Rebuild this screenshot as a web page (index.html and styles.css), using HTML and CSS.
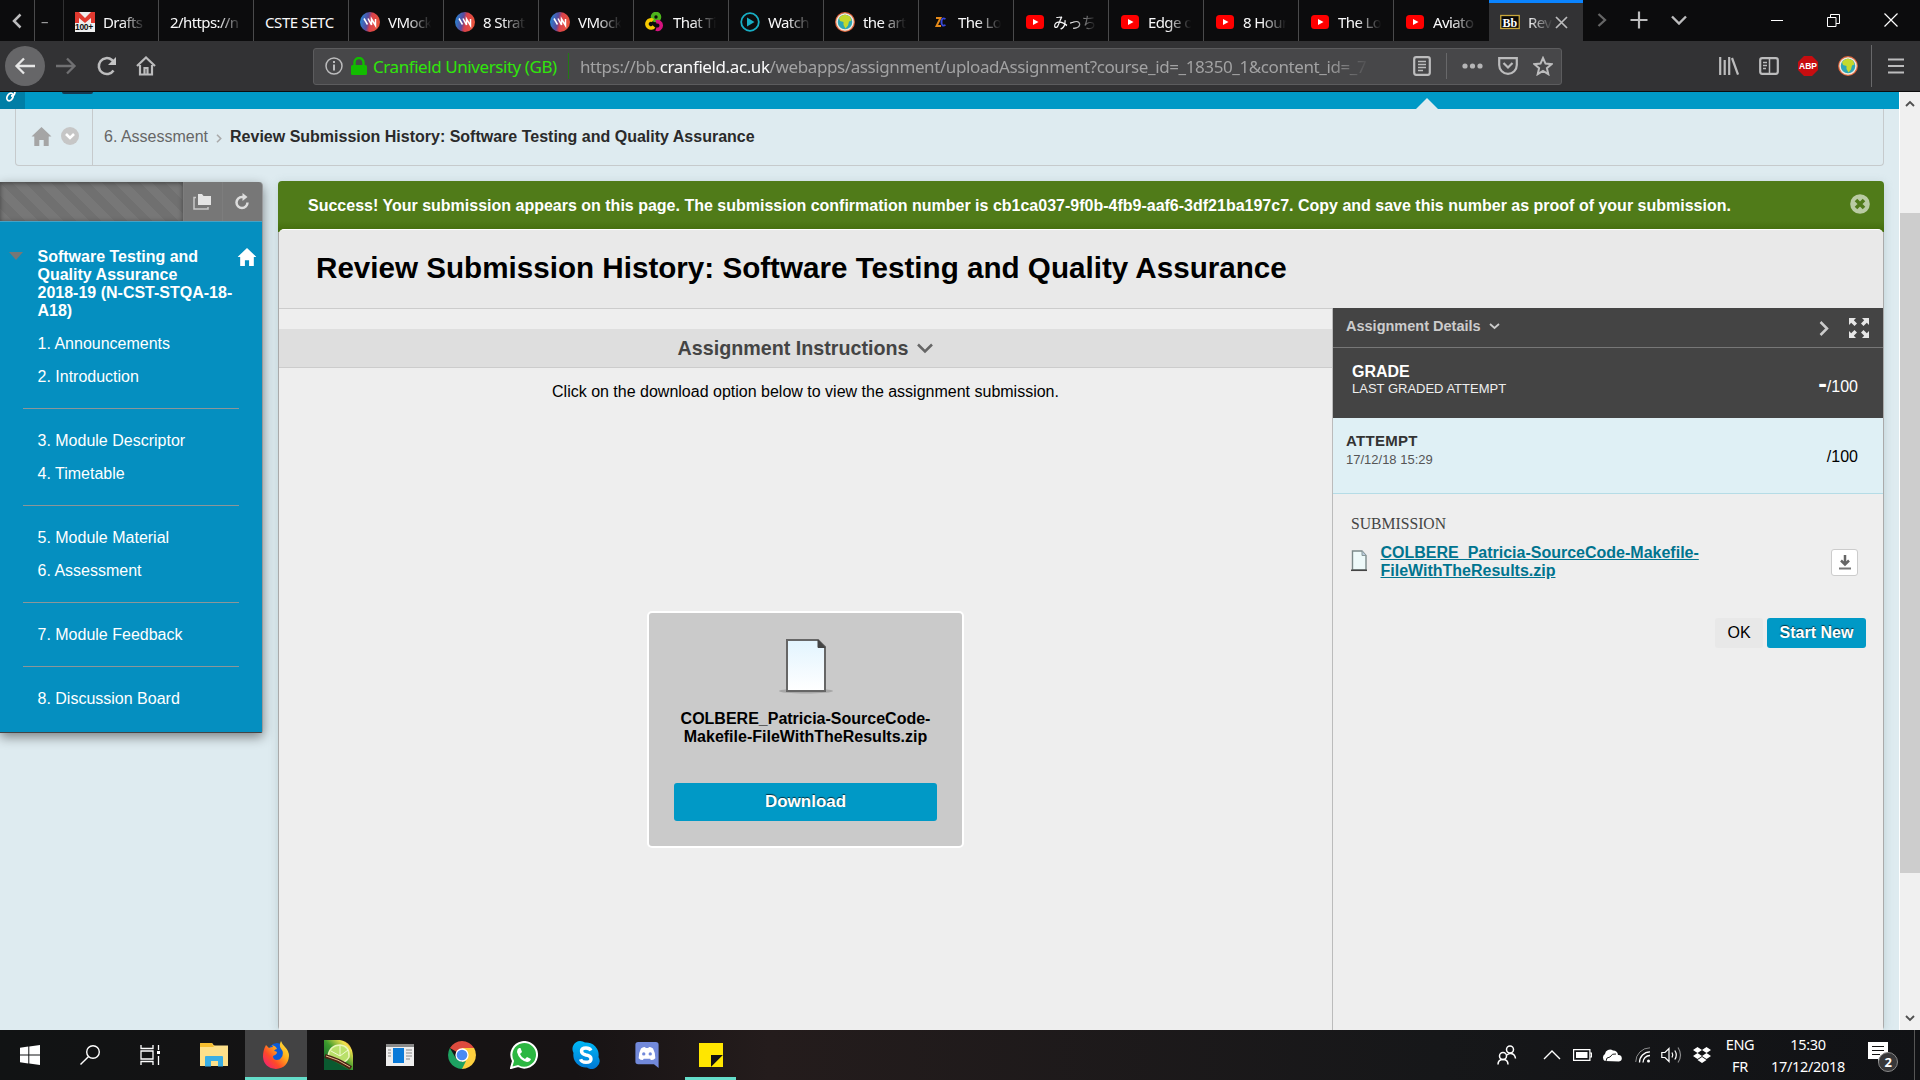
FILE: index.html
```html
<!DOCTYPE html>
<html lang="en">
<head>
<meta charset="utf-8">
<title>Review Submission History</title>
<link rel="stylesheet" href="styles.css">
</head>
<body>
<svg width="0" height="0" class="defs" aria-hidden="true">
  <defs>
    <linearGradient id="gv" x1="0" y1="0" x2="1" y2="0.2"><stop offset="0" stop-color="#1c8fe0"/><stop offset=".45" stop-color="#5a4a9c"/><stop offset=".6" stop-color="#d8404c"/><stop offset="1" stop-color="#e8533c"/></linearGradient>
    <linearGradient id="gdoc" x1="0" y1="0" x2="0" y2="1"><stop offset="0" stop-color="#e2f4fe"/><stop offset="1" stop-color="#fff"/></linearGradient>
    <linearGradient id="gff" x1="1" y1="0" x2="0" y2="1"><stop offset="0" stop-color="#fff04a"/><stop offset=".35" stop-color="#ffb01c"/><stop offset=".65" stop-color="#ff4a28"/><stop offset="1" stop-color="#f0128c"/></linearGradient>
    <linearGradient id="gsk" x1="0" y1="0" x2="0" y2="1"><stop offset="0" stop-color="#00b8f5"/><stop offset="1" stop-color="#0078d4"/></linearGradient>
    <linearGradient id="glime" x1="0" y1="1" x2="1" y2="0"><stop offset="0" stop-color="#06552c"/><stop offset=".5" stop-color="#3c9a2e"/><stop offset=".8" stop-color="#f2e24c"/><stop offset="1" stop-color="#e0452c"/></linearGradient>
    <symbol id="vmock" viewBox="0 0 20 20"><circle cx="10" cy="10" r="10" fill="url(#gv)"/><path d="M4 6.500l3.500 6M8 6.500l3.500 6.500V7l4 6.500V7" fill="none" stroke="#fff" stroke-width="1.500"/></symbol>
    <symbol id="yt" viewBox="0 0 20 20"><rect x="1" y="3" width="18" height="14" rx="3.500" fill="#f00"/><path d="M8 7l5.500 3L8 13z" fill="#fff"/></symbol>
    <symbol id="globe" viewBox="0 0 20 20"><circle cx="10" cy="10" r="9.200" fill="#2da5b5" stroke="#e2643a" stroke-width="1.500"/><circle cx="10" cy="10" r="8" fill="none" stroke="#f6e9dd" stroke-width="1.500"/><path d="M4 6q2-3 6-3.500l5 2 1.500 4-2.500 1-1 4-2.500 3-2-3.500V10L5 9z" fill="#c5d92c"/></symbol>
    <symbol id="house" viewBox="0 0 20 19"><path d="M10 0l10 9.500h-2.800V19h-5v-6H7.800v6h-5V9.500H0z" fill="currentColor"/></symbol>
  </defs>
</svg>

<header class="tabs">
  <div class="scroll-left"><svg width="12" height="16" viewBox="0 0 12 16"><path d="M9.500 1.500L3 8l6.500 6.500" class="ln" stroke-width="2.500"/></svg></div>
  <div class="tab cut"><span class="label">–</span></div>
  <div class="tab"><svg class="fav" viewBox="0 0 20 20"><rect y="0" width="20" height="20" fill="#eee"/><path d="M0 0h4l6 6 6-6h4v11h-4V6l-6 5-6-5v5H0z" fill="#e23a30"/><text x="0" y="18" class="gm">100+</text></svg><span class="label">Drafts</span></div>
  <div class="tab plain"><span class="label">2/https://n</span></div>
  <div class="tab plain"><span class="label solid">CSTE SETC</span></div>
  <div class="tab"><svg class="fav"><use href="#vmock"/></svg><span class="label">VMock</span></div>
  <div class="tab"><svg class="fav"><use href="#vmock"/></svg><span class="label">8 Strat</span></div>
  <div class="tab"><svg class="fav"><use href="#vmock"/></svg><span class="label">VMock</span></div>
  <div class="tab"><svg class="fav" viewBox="0 0 20 20" fill="none" stroke-width="3.600"><circle cx="11" cy="5" r="3.500" stroke="#4db51c"/><path d="M8 8.500a4 4 0 1 0 1 6" stroke="#f7c900"/><path d="M11 10a3.800 3.800 0 1 1 0 7" stroke="#d6127e"/></svg><span class="label">That Ti</span></div>
  <div class="tab"><svg class="fav" viewBox="0 0 20 20"><circle cx="10" cy="10" r="8.800" fill="none" stroke="#18aec4" stroke-width="1.800"/><path d="M7 5.500l7.500 4.500L7 14.500z" fill="#18aec4"/></svg><span class="label">Watch</span></div>
  <div class="tab"><svg class="fav"><use href="#globe"/></svg><span class="label">the art</span></div>
  <div class="tab"><svg class="fav" viewBox="0 0 20 20" fill="none" stroke-width="1.900"><path d="M6 6h4.500L6.500 14H11" stroke="#e58a1a"/><path d="M15.500 7q-4-2-4 3t4 3" stroke="#3848d8"/></svg><span class="label">The Lo</span></div>
  <div class="tab"><svg class="fav"><use href="#yt"/></svg><span class="label">みっち</span></div>
  <div class="tab"><svg class="fav"><use href="#yt"/></svg><span class="label">Edge o</span></div>
  <div class="tab"><svg class="fav"><use href="#yt"/></svg><span class="label">8 Hour</span></div>
  <div class="tab"><svg class="fav"><use href="#yt"/></svg><span class="label">The Lo</span></div>
  <div class="tab last"><svg class="fav"><use href="#yt"/></svg><span class="label">Aviato</span></div>
  <div class="tab active"><svg class="fav" viewBox="0 0 20 20"><rect x=".75" y="3.500" width="18.500" height="13" fill="#0a0a0a" stroke="#c8a63a" stroke-width="1.300"/><text x="2.500" y="14.500" class="bb">Bb</text></svg><span class="label">Rev</span><svg class="x" width="13" height="13" viewBox="0 0 13 13"><path d="M1 1l11 11M12 1L1 12" class="ln" stroke-width="1.700"/></svg></div>
  <div class="tab-tools">
    <svg width="10" height="14" viewBox="0 0 10 14"><path d="M1.500 1L8 7l-6.500 6" class="ln dim" stroke-width="2.300"/></svg>
    <svg width="18" height="18" viewBox="0 0 18 18"><path d="M9 .5v17M.5 9h17" class="ln" stroke-width="2.200"/></svg>
    <svg width="16" height="10" viewBox="0 0 16 10"><path d="M1 1.500l7 7 7-7" class="ln" stroke-width="2.400"/></svg>
  </div>
  <div class="win-tools">
    <svg width="12" height="13" viewBox="0 0 12 13"><path d="M0 6.500h12" stroke="#fff"/></svg>
    <svg width="13" height="13" viewBox="0 0 13 13" fill="none" stroke="#fff"><path d="M.5 3.500h8.500v9H.5zM3.500 3.500V.5h9v9H9"/></svg>
    <svg width="14" height="14" viewBox="0 0 14 14"><path d="M.5.5l13 13M13.500.5l-13 13" stroke="#fff" stroke-width="1.200"/></svg>
  </div>
</header>

<nav class="toolbar">
  <div class="nav-buttons">
    <span class="back"><svg width="22" height="18" viewBox="0 0 22 18"><path d="M21 9H2.500M10 1.500L2.500 9l7.500 7.500" class="ln bright" stroke-width="2.300"/></svg></span>
    <svg width="21" height="18" viewBox="0 0 21 18"><path d="M0 9h18.500M11 1.500L18.500 9 11 16.500" class="ln faint" stroke-width="2.300"/></svg>
    <svg width="20" height="20" viewBox="0 0 20 20"><path d="M16.500 14.500A8 8 0 1 1 15 4l2.500 3" class="ln" stroke-width="2.500"/><path d="M19 1v8h-8z" fill="#c4c4c5"/></svg>
    <svg class="home" width="20" height="20" viewBox="0 0 20 20"><path d="M1 10l9-8.500L19 10M4 9v9.500h12V9M8.500 18v-6h3v6" class="ln" stroke-width="2.200"/></svg>
  </div>
  <div class="urlbar">
    <svg width="18" height="18" viewBox="0 0 18 18"><circle cx="9" cy="9" r="8" class="ln" stroke-width="1.500"/><path d="M9 7.500v6M9 4v2" class="ln" stroke-width="2"/></svg>
    <svg class="lock" width="16" height="18" viewBox="0 0 16 18"><path d="M3.500 9V5.500a4.500 4.500 0 0 1 9 0V9" fill="none" stroke="#12bc00" stroke-width="2.400"/><rect y="8" width="16" height="10" rx="1.500" fill="#12bc00"/></svg>
    <span class="owner">Cranfield University (GB)</span>
    <span class="url">https://bb.<b>cranfield.ac.uk</b>/webapps/assignment/uploadAssignment?course_id=_18350_1&amp;content_id=_7</span>
    <div class="url-tools">
      <svg width="18" height="20" viewBox="0 0 18 20"><rect x="1.200" y="1.200" width="15.600" height="17.600" rx="2" class="ln" stroke-width="2.200"/><path d="M5 5.500h8M5 8.500h8M5 11.500h8M5 14.500h5" class="ln" stroke-width="1.400"/></svg>
      <i class="sep"></i>
      <svg width="21" height="6" viewBox="0 0 21 6" fill="#b5b5b6"><circle cx="3" cy="3" r="2.600"/><circle cx="10.500" cy="3" r="2.600"/><circle cx="18" cy="3" r="2.600"/></svg>
      <svg width="20" height="18" viewBox="0 0 20 18"><path d="M1.200 1.200h17.600V8a8.800 8.800 0 0 1-17.600 0zM5.500 6L10 10.500 14.500 6" class="ln" stroke-width="2.200"/></svg>
      <svg width="20" height="20" viewBox="0 0 20 20"><path d="M10 2l2.500 5.600 6 .6-4.600 4 1.400 6L10 15l-5.300 3.200 1.400-6-4.600-4 6-.6z" class="ln" stroke-width="2"/></svg>
    </div>
  </div>
  <div class="ext">
    <svg width="20" height="18" viewBox="0 0 20 18"><path d="M1.200 0v18M5.700 3v15M10.200 0v18M13 1l6 16.500" class="ln" stroke-width="2.200"/></svg>
    <svg width="20" height="18" viewBox="0 0 20 18"><rect x="1.200" y="1.200" width="17.600" height="15.600" rx="2" class="ln" stroke-width="2.200"/><path d="M10.500 1v16M4 5.500h4M4 8.500h4M4 11.500h3" class="ln" stroke-width="1.500"/></svg>
    <svg width="20" height="20" viewBox="0 0 20 20"><path d="M6 0h8l6 6v8l-6 6H6l-6-6V6z" fill="#c70d10"/><text x="10" y="13.300" class="abp">ABP</text></svg>
    <svg width="20" height="20"><use href="#globe"/></svg>
    <i class="sep tall"></i>
    <svg width="16" height="16" viewBox="0 0 16 16"><path d="M0 1.500h16M0 8h16M0 14.500h16" class="ln" stroke-width="2.200"/></svg>
  </div>
</nav>

<div class="viewport">
  <div class="page">
    <div class="bluebar"><span class="link-tab"><svg width="12" height="11" viewBox="0 0 12 11"><ellipse cx="5" cy="5" rx="2.800" ry="4" transform="rotate(30 5 5)" fill="none" stroke="#fff" stroke-width="1.800"/><path d="M6 4q4 0 4-5" fill="none" stroke="#fff" stroke-width="1.800"/></svg></span><span class="avatar"></span><span class="pointer"></span></div>
    <div class="crumbs">
      <div class="crumb-icons">
        <svg class="ch" width="21" height="19"><use href="#house"/></svg>
        <svg width="18" height="18" viewBox="0 0 18 18"><circle cx="9" cy="9" r="9" fill="#c6c6c6"/><path d="M5 7l4 4 4-4" fill="none" stroke="#fff" stroke-width="2.600"/></svg>
      </div>
      <div class="crumb-text"><span>6. Assessment</span><svg width="6" height="9" viewBox="0 0 6 9"><path d="M1 .8l3.700 3.700L1 8.200" fill="none" stroke="#aaa" stroke-width="1.600"/></svg><b>Review Submission History: Software Testing and Quality Assurance</b></div>
    </div>
    <div class="columns">
      <aside class="side">
        <div class="side-head">
          <div class="stripes"></div>
          <div class="side-btn"><svg width="19" height="16" viewBox="0 0 19 16"><path d="M5 0h4l1.500 2H18v9H5z" fill="#e4e4e4"/><path d="M3 3.500H1V15h14v-2" fill="none" stroke="#c8c8c8" stroke-width="1.500"/></svg></div>
          <div class="side-btn"><svg width="16" height="17" viewBox="0 0 16 17"><path d="M10 4H8a5.500 5.500 0 1 0 5.500 5.500" fill="none" stroke="#ddd" stroke-width="2.500"/><path d="M8.500 0l5 4-5 4z" fill="#ddd"/></svg></div>
        </div>
        <div class="menu">
          <div class="course"><i class="tri"></i><b>Software Testing and Quality Assurance<br>2018-19 (N-CST-STQA-18-A18)</b><svg width="20" height="18" viewBox="0 0 20 19"><use href="#house"/></svg></div>
          <a>1. Announcements</a><a>2. Introduction</a><hr>
          <a>3. Module Descriptor</a><a>4. Timetable</a><hr>
          <a>5. Module Material</a><a>6. Assessment</a><hr>
          <a>7. Module Feedback</a><hr>
          <a>8. Discussion Board</a>
        </div>
      </aside>
      <main class="content">
        <div class="success"><b>Success! Your submission appears on this page. The submission confirmation number is cb1ca037-9f0b-4fb9-aaf6-3df21ba197c7. Copy and save this number as proof of your submission.</b>
          <svg width="20" height="20" viewBox="0 0 20 20"><circle cx="10" cy="10" r="9.800" fill="#b9cba3"/><path d="M6 6l8 8M14 6l-8 8" stroke="#507a1a" stroke-width="3.600"/></svg></div>
        <div class="panel">
          <h1><span>Review Submission History: Software Testing and Quality Assurance</span></h1>
          <div class="split">
            <section class="left">
              <h2><span>Assignment Instructions</span><svg width="16" height="11" viewBox="0 0 16 11"><path d="M1 1.500l7 7 7-7" fill="none" stroke="#666" stroke-width="2.500"/></svg></h2>
              <p><span>Click on the download option below to view the assignment submission.</span></p>
              <div class="card">
                <svg width="56" height="56" viewBox="0 0 56 56"><ellipse cx="28" cy="53" rx="27" ry="2.500" fill="#999" opacity=".7"/><path d="M9 2h31l7 7v44H9z" fill="url(#gdoc)" stroke="#666" stroke-width="2"/><path d="M40 2l7 7.500h-7z" fill="#444" stroke="#444"/></svg>
                <b>COLBERE_Patricia-SourceCode-<br>Makefile-FileWithTheResults.zip</b>
                <button class="download">Download</button>
              </div>
            </section>
            <section class="right">
              <div class="details-head"><b>Assignment Details</b><svg width="11" height="7" viewBox="0 0 11 7"><path d="M1 1l4.500 4L10 1" fill="none" stroke="#ccc" stroke-width="1.800"/></svg><span class="grow"></span>
                <svg width="10" height="15" viewBox="0 0 10 15"><path d="M1.500 1L8 7.500 1.500 14" fill="none" stroke="#ccc" stroke-width="2.500"/></svg>
                <svg class="exp" width="20" height="20" viewBox="0 0 20 20" fill="#e6e6e6"><path d="M0 0h7L4.800 2.200 8 5.500 5.500 8 2.200 4.800 0 7zM20 0v7l-2.200-2.200L14.500 8 12 5.500l3.200-3.300L13 0zM0 20v-7l2.200 2.200L5.500 12 8 14.500l-3.200 3.300L7 20zM20 20h-7l2.200-2.200L12 14.500l2.500-2.500 3.300 3.200L20 13z"/></svg></div>
              <div class="grade"><div><b>GRADE</b><small>LAST GRADED ATTEMPT</small></div><span class="score"><b>-</b>/100</span></div>
              <div class="attempt"><div><b>ATTEMPT</b><small>17/12/18 15:29</small></div><span class="score">/100</span></div>
              <div class="sub-title"><span>SUBMISSION</span></div>
              <div class="file">
                <svg width="18" height="22" viewBox="0 0 18 22"><path d="M2.500 1h9.500l4 4.500V20H2.500z" fill="#eefafa" stroke="#7c8a8a" stroke-width="1.400"/><path d="M12 1v4.500h4" fill="#bcd" stroke="#899"/><path d="M1 20.300h16" stroke="#444" stroke-width="1.500"/></svg>
                <b>COLBERE_Patricia-SourceCode-Makefile-<br>FileWithTheResults.zip</b>
                <span class="dl"><svg width="12" height="15" viewBox="0 0 12 15"><path d="M6 0v9M2 5.500L6 9.500l4-4" fill="none" stroke="#666" stroke-width="2.500"/><path d="M0 13.500h12" stroke="#777" stroke-width="2"/></svg></span>
              </div>
              <div class="actions"><button class="ok">OK</button><button class="start">Start New</button></div>
            </section>
          </div>
        </div>
      </main>
    </div>
  </div>
  <div class="scrollbar">
    <svg width="10" height="7" viewBox="0 0 10 7"><path d="M1 6l4-4 4 4" fill="none" stroke="#505050" stroke-width="1.900"/></svg>
    <i></i>
    <svg width="10" height="7" viewBox="0 0 10 7"><path d="M1 1l4 4 4-4" fill="none" stroke="#505050" stroke-width="1.900"/></svg>
  </div>
</div>

<footer class="taskbar">
  <div class="sys"><svg width="20" height="20" viewBox="0 0 20 20" fill="#fff"><path d="M0 2.800L8.300 1.600v7.900H0zM9.300 1.500L20 0v9.500H9.300zM0 10.500h8.300v8L0 17.300zM9.300 10.500H20V20L9.300 18.600z"/></svg></div>
  <div class="sys"><svg width="20" height="20" viewBox="0 0 20 20" fill="none" stroke="#fff" stroke-width="1.400"><circle cx="13" cy="7" r="6.300"/><path d="M8.600 11.400L.5 19.500"/></svg></div>
  <div class="sys"><svg width="20" height="20" viewBox="0 0 20 20" fill="none" stroke="#fff" stroke-width="1.300"><path d="M1 0v3.500h12V0M1 20v-3.500h12V20M1 6h12v8H1zM18.500 0v5M18.500 11v9"/><path d="M17 6h3v3h-3z" fill="#fff" stroke="none"/></svg></div>
  <div class="app"><svg width="28" height="24" viewBox="0 0 28 24"><path d="M0 1q0-1 1-1h11l2 2.500h14V23H0z" fill="#fde08a"/><path d="M0 4h13l2-1.500h-2L12 0H1Q0 0 0 1z" fill="#f5bd2f"/><path d="M5 23V14q0-1 1-1h16q1 0 1 1v9.500h-5V18h-7v5.500H5z" fill="#3aaee4"/></svg></div>
  <div class="app on"><svg width="28" height="28" viewBox="0 0 28 28"><circle cx="15" cy="11" r="9" fill="#0a5ad8"/><path d="M4 4l3 3q2-1 4-1l-1-2q4 1 5 4-2 0-3 2 3 0 3 2-1 2-4 3 0 4 4 4 3 0 4-2 4-5-.5-10Q17 4 19 0q1 3 4 6 4 4 4 9-1 12-13 13Q2 27 1 16 1 9 4 4z" fill="url(#gff)"/></svg></div>
  <div class="app"><svg width="30" height="30" viewBox="0 0 30 30"><path d="M1 0h16q12 2 13 16v14H1z" fill="url(#glime)"/><path d="M5 16Q7 5 17 5q10 1 9 12-3 6-9 5z" fill="#b9e06a" stroke="#eaf6b8" stroke-width="1.500"/><path d="M17 16V6M17 16L8 11M17 16l8-6" stroke="#f2fbd0"/><path d="M1 16l26 14H1z" fill="#0a5a30"/><path d="M2 16q12 3 26 12" fill="none" stroke="#4a2414" stroke-width="4"/><path d="M3 16q12 3 24 11" fill="none" stroke="#e9b88a"/></svg></div>
  <div class="app"><svg width="28" height="22" viewBox="0 0 28 22"><path d="M0 0h28v22H0z" fill="#eee"/><path d="M0 0h28v3H0z" fill="#888"/><path d="M7 4h11v15H7z" fill="#0a7ad8"/><path d="M2 6h3M2 9h3M2 12h3M20 6h6M20 9h6M20 12h6M20 15h4" stroke="#888"/></svg></div>
  <div class="app"><svg width="28" height="28" viewBox="0 0 28 28"><path d="M14 14L1.900 7A14 14 0 0 1 26.100 7z" fill="#dd4b3e"/><path d="M14 14V7h12.100A14 14 0 0 1 14 28z" fill="#fdcf3e"/><path d="M14 28A14 14 0 0 1 1.900 7l6.100 10.500 6 3.500 4-1z" fill="#1da261"/><circle cx="14" cy="14" r="6" fill="#4a8af4" stroke="#fff" stroke-width="1.300"/></svg></div>
  <div class="app"><svg width="28" height="28" viewBox="0 0 28 28"><path d="M1 27l2-7A12.800 12.800 0 1 1 8 25z" fill="#2bb741" stroke="#fff" stroke-width="2"/><path d="M9 7q-2 1-2 4 2 8 10 10 3 0 4-3l-4-2-2 2q-4-2-5-5l2-2-1.500-4z" fill="#fff"/></svg></div>
  <div class="app"><svg width="28" height="28" viewBox="0 0 28 28"><path d="M8 0q3 0 5 1.500A12.500 12.500 0 0 1 26.500 16 8 8 0 0 1 15 26.500 12.500 12.500 0 0 1 1.500 12 8 8 0 0 1 8 0z" fill="url(#gsk)"/><path d="M19 9.500Q17.500 7 14 7q-4.500 0-4.500 3t4.500 4q5 .8 5 4t-5 3.300q-4.500 0-5.500-3" fill="none" stroke="#fff" stroke-width="3.400"/></svg></div>
  <div class="app discord"><svg width="24" height="26" viewBox="0 0 25 28"><path d="M3 0h19q3 0 3 3v25l-5-4H3q-3 0-3-3V3q0-3 3-3z" fill="#7289da"/><path d="M3.500 17.500q0-6 2.500-10.500 2.500-1.500 4.500-1.500l.5 1h3l.5-1q2 0 4.500 1.500 2.500 4.500 2.500 10.500-2 2-5 2L16 18H9l-1 1.500q-2.500 0-4.500-2z" fill="#fff"/><circle cx="9" cy="12.800" r="1.800" fill="#7289da"/><circle cx="16" cy="12.800" r="1.800" fill="#7289da"/></svg></div>
  <div class="app under"><svg width="24" height="24" viewBox="0 0 24 24"><path d="M0 0h24v12l-12 12H0z" fill="#ffe600"/><path d="M12 24V12h12z" fill="#111"/><path d="M24 24H12l12-12z" fill="#ffe600"/></svg></div>
  <div class="tray">
    <svg class="people" width="20" height="20" viewBox="0 0 20 20" fill="none" stroke="#fff" stroke-width="1.500"><circle cx="13" cy="4.500" r="3.500"/><circle cx="6" cy="11" r="3.500"/><path d="M1 19.500q0-5 5-5t5 5M10 10q2-2 4-1.500 4 .5 4.500 5"/></svg>
    <svg class="caret" width="18" height="10" viewBox="0 0 18 10"><path d="M1 9l8-8 8 8" fill="none" stroke="#fff" stroke-width="1.400"/></svg>
    <svg class="bat" width="19" height="12" viewBox="0 0 19 12"><path d="M.6.6h16.300v10.800H.6zM17 4h1.500v4H17" fill="none" stroke="#fff" stroke-width="1.200"/><path d="M3 3h11.500v6H3z" fill="#fff"/></svg>
    <svg class="cloud" width="21" height="13" viewBox="0 0 21 13"><path d="M4 12a4 4 0 0 1 0-7 5 5 0 0 1 8-3.500A5 5 0 0 1 17 6a3.200 3.200 0 0 1 1 6.500z" fill="#fff"/><path d="M5 12q0-4 4-4 2-4 6-3" fill="none" stroke="#222"/></svg>
    <svg class="wifi" width="16" height="16" viewBox="0 0 16 16" fill="none" stroke="#fff"><path d="M.7 15A14.300 14.300 0 0 1 15 .8" opacity=".5"/><path d="M4.500 15.500A10.500 10.500 0 0 1 15 4.800M8 15.500a7 7 0 0 1 7-7" stroke-width="1.300"/><circle cx="13.500" cy="14" r="1.500" fill="#fff" stroke="none"/></svg>
    <svg class="vol" width="21" height="18" viewBox="0 0 21 18" fill="none" stroke="#fff" stroke-width="1.200"><path d="M.8 6.500H4l4-4v13l-4-4H.8zM11 6.500q1.500 2.500 0 5M13.800 4.500q3 4.500 0 9"/><path d="M17 1.500q5 7.500 0 15" opacity=".5"/></svg>
    <svg class="drop" width="18" height="16" viewBox="0 0 18 16" fill="#fff"><path d="M4.500 0L9 3 4.500 6 0 3zM13.500 0L18 3l-4.500 3L9 3zM4.500 6L9 9l-4.500 3L0 9zM13.500 6L18 9l-4.500 3L9 9zM9 10l4.500 3L9 16l-4.500-3z"/></svg>
    <div class="two lang"><span>ENG</span><span>FR</span></div>
    <div class="two clock"><span>15:30</span><span>17/12/2018</span></div>
    <div class="note"><svg width="20" height="21" viewBox="0 0 20 21"><path d="M0 0h20v17h-6l-4 4v-4H0z" fill="#fff"/><path d="M4 4.500h12M4 8.500h12M4 12.500h8" stroke="#111" stroke-width="1.200"/></svg><span class="badge">2</span></div>
    <i class="peek"></i>
  </div>
</footer>
</body>
</html>
```
FILE: styles.css
```css
* { box-sizing: border-box; }
body { margin: 0; width: 1920px; height: 1080px; overflow: hidden; display: flex; flex-direction: column; font: 16px/18px "Liberation Sans", Arial, sans-serif; color: #000; }
svg { display: block; flex: none; }
.defs { position: absolute; }
button { font: inherit; border: 0; padding: 0; }
h1, h2, p { margin: 0; }
.ln { fill: none; stroke: #bcbcbd; }
.ln.dim { stroke: #666; }
.ln.bright { stroke: #e6e6e6; }
.ln.faint { stroke: #707072; }

/* browser tabs */
.tabs { height: 41px; flex: none; display: flex; background: #0c0c0d; color: #f9f9fa; font: 15px/20px "Noto Sans", "Noto Sans CJK JP", sans-serif; }
.scroll-left { width: 35px; display: flex; align-items: center; justify-content: center; border-right: 1px solid #4a4a4b; }
.tab { width: 95px; flex: none; display: flex; align-items: center; gap: 8px; padding: 2px 8px 0 11px; border-right: 1px solid #4a4a4b; overflow: hidden; }
.tab.cut { width: 29px; padding: 0 0 0 6px; opacity: .6; }
.tab.last { border-right-color: transparent; }
.tab.active { width: 94px; background: #323234; border: 0; border-top: 3px solid #0a84ff; padding: 0 15px 0 11px; }
.tab.plain { padding-left: 11px; }
.fav { width: 20px; height: 20px; }
.label { flex: 1; min-width: 0; white-space: nowrap; overflow: hidden; letter-spacing: -.6px; -webkit-mask-image: linear-gradient(to right, #000 40%, transparent 92%); mask-image: linear-gradient(to right, #000 40%, transparent 92%); }
.plain .label { -webkit-mask-image: linear-gradient(to right, #000 65%, transparent 97%); mask-image: linear-gradient(to right, #000 65%, transparent 97%); }
.plain .label.solid { letter-spacing: -.4px; -webkit-mask-image: none; mask-image: none; }
.active .label { -webkit-mask-image: linear-gradient(to right, #bbb, transparent); mask-image: linear-gradient(to right, #bbb, transparent); }
.active .x { margin-left: -6px; }
.gm { font: bold 8.500px "Liberation Sans", sans-serif; letter-spacing: -.3px; fill: #111; }
.bb { font: bold 12px "Liberation Serif", serif; fill: #fff; }
.tab-tools { display: flex; align-items: center; padding: 0 0 2px 14px; gap: 29px; }
.tab-tools svg:nth-child(2) { margin-left: -6px; }
.tab-tools svg:nth-child(3) { margin-left: -6px; }
.win-tools { flex: 1; display: flex; align-items: center; justify-content: flex-end; gap: 44px; padding: 0 22px 1px 0; }

/* navigation toolbar */
.toolbar { height: 51px; flex: none; display: flex; align-items: center; background: #323234; border-bottom: 1px solid #0c0c0d; }
.nav-buttons { width: 313px; display: flex; align-items: center; gap: 20px; padding-left: 5px; }
.home { margin-left: -1px; }
.back { width: 40px; height: 40px; border-radius: 50%; background: #666668; display: flex; align-items: center; justify-content: center; margin-right: -9px; }
.urlbar { width: 1249px; height: 37px; display: flex; align-items: center; background: #474749; border: 1px solid #5c5c5e; border-radius: 3px; padding-left: 11px; font: 17px/24px "Noto Sans", sans-serif; color: #a2a2a3; }
.lock { margin-left: 8px; }
.owner { color: #30e60b; width: 196px; margin-left: 6px; padding-top: 2px; border-right: 1px solid #227a14; white-space: nowrap; letter-spacing: -.43px; }
.url { width: 795px; margin-left: 11px; padding-top: 2px; white-space: nowrap; overflow: hidden; letter-spacing: -.4px; -webkit-mask-image: linear-gradient(to right, #000 94%, transparent 99.500%); mask-image: linear-gradient(to right, #000 94%, transparent 99.500%); }
.url b { font-weight: 400; color: #f9f9fa; }
.url-tools { display: flex; align-items: center; gap: 15px; margin-left: 38px; }
.sep { width: 1px; height: 26px; background: #68686a; }
.tall { height: 42px; }
.ext { display: flex; align-items: center; gap: 19.500px; margin-left: 157px; }
.ext .tall { margin: 0 -4px 0 -6px; }
.abp { font: bold 8.500px "Liberation Sans", sans-serif; fill: #fff; text-anchor: middle; }

/* page viewport */
.viewport { flex: 1; min-height: 0; display: flex; }
.page { width: 1899px; display: flex; flex-direction: column; background: #deebf0; overflow: hidden; }
.scrollbar { width: 21px; background: #f0f0f0; display: flex; flex-direction: column; align-items: center; padding: 8px 0; border-left: 1px solid #fff; }
.scrollbar i { width: 20px; height: 660px; margin: 106px 0 auto; background: #cdcdcd; }
.bluebar { height: 17px; flex: none; background: #0099c6; display: flex; align-items: flex-start; }
.link-tab { width: 25px; height: 17px; background: #007ea6; padding-left: 5px; }
.avatar { width: 31px; height: 2px; margin-left: 37px; background: #153a52; border-radius: 0 0 15px 15px; }
.pointer { margin: 6px 0 0 1323px; border: 11px solid transparent; border-top: 0; border-bottom-color: #deebf0; }
.crumbs { height: 57px; width: 1869px; flex: none; margin-left: 15px; display: flex; border: 1px solid #c6cacc; border-top: 0; border-radius: 0 0 4px 4px; }
.crumb-icons { width: 77px; border-right: 1px solid #c6cacc; display: flex; align-items: center; padding: 0 0 2px 15px; gap: 9px; color: #a5a5a5; }
.crumb-text { display: flex; align-items: center; padding-left: 11px; gap: 8px; white-space: nowrap; color: #666; }
.crumb-text b { color: #2a2a2a; }
.crumb-text svg { margin-top: 2px; }
.columns { flex: 1; min-height: 0; display: flex; align-items: flex-start; padding-top: 15px; }

/* course menu */
.side { width: 263px; flex: none; margin: 1px 15px 0 0; border-right: 1px solid #98999b; border-bottom: 1px solid #444; border-radius: 0 4px 2px 0; box-shadow: 0 4px 12px rgba(0, 0, 0, .45); }
.side-head { display: flex; height: 40px; border-bottom: 1px solid #46a2c6; background: #777; border-radius: 0 3px 0 0; }
.stripes { width: 183px; background: repeating-linear-gradient(45deg, #777 0 9px, #707070 9px 18px); box-shadow: inset 0 1px 5px #444; }
.side-btn { width: 39px; display: flex; align-items: center; justify-content: center; border-left: 1px solid #7d7d7d; }
.side-btn svg { margin-right: 1px; }
.menu { height: 510px; background: #058fc0; color: #fff; padding-top: 26px; }
.course { height: 79px; display: flex; align-items: flex-start; }
.course b { width: 196px; margin-left: 14.500px; }
.course svg { margin: 0 0 0 3.500px; }
.tri { margin: 4px 0 0 9px; border: 7.500px solid transparent; border-bottom: 0; border-top: 8px solid #777; }
.menu a { display: block; height: 33px; line-height: 33px; padding-left: 37.500px; }
.menu hr { margin: 15px 23px; height: 1px; border: 0; background: #8c9699; }

/* main panel */
.content { width: 1606px; height: 849px; display: flex; flex-direction: column; box-shadow: 0 2px 10px rgba(120, 150, 150, .3); border-radius: 4px; background: linear-gradient(#507b19 0 40px, #46700f 48px, #46700f 51px, #aaa 51px); }
.success { height: 48px; flex: none; display: flex; align-items: center; justify-content: space-between; color: #fff; padding: 1px 14px 0 30px; white-space: nowrap; }
.success svg { margin-top: -4px; }
.panel { flex: 1; margin: 0 1px; background: #eee; border-radius: 5px 5px 0 0; overflow: hidden; border-top: 1px solid #fff; display: flex; flex-direction: column; }
h1 { height: 79px; flex: none; background: #e9e9e9; border-bottom: 1px solid #ccc; padding-left: 37px; font-size: 29.620px; line-height: 76px; white-space: nowrap; }
.split { flex: 1; display: flex; }
.left { width: 1053px; padding-top: 20px; display: flex; flex-direction: column; align-items: center; }
h2 { align-self: stretch; height: 39px; background: #dedede; border-bottom: 1px solid #ccc; display: flex; align-items: center; justify-content: center; gap: 9px; font-size: 19.700px; color: #444; }
p { margin-top: 15px; }
.card { width: 317px; height: 237px; margin-top: 210px; border: 2px solid #fff; border-radius: 5px; background: #cacaca; display: flex; flex-direction: column; align-items: center; padding-top: 25px; text-align: center; }
.card b { margin-top: 16px; white-space: nowrap; }
.download { width: 263px; height: 38px; margin-top: 37px; background: #0099c6; border-radius: 3px; color: #fff; font-size: 17px; font-weight: 700; text-shadow: 0 -1px 1px #034; }
.right { width: 551px; border-left: 1px solid #bbb; margin-top: -1px; }
.details-head { height: 40px; background: #444; border-bottom: 1px solid #777; display: flex; align-items: center; padding: 0 14px 3px 13px; color: #ccc; font-size: 14.500px; }
.details-head svg:nth-of-type(1) { margin-left: 8px; }
.grow { flex: 1; }
.details-head .exp { margin-left: 20px; }
.details-head > svg:nth-of-type(n+2) { margin-top: 4px; }
.grade, .attempt { display: flex; justify-content: space-between; white-space: nowrap; }
.grade { height: 70px; background: #444; color: #fff; padding: 15px 25px 0 19px; }
.grade b, .attempt div b, small { display: block; }
.grade small { font-size: 13px; line-height: 15px; color: #eee; }
.score { margin-top: 15px; }
.grade .score b { display: inline; font-size: 26px; line-height: 10px; }
.attempt { height: 76px; background: #dff0f5; border-bottom: 1px solid #b5dce6; padding: 14px 25px 0 13px; }
.attempt div b { color: #333; font-size: 15px; letter-spacing: .3px; }
.attempt small { font-size: 13px; line-height: 19px; color: #555; }
.attempt .score { margin-top: 16px; }
.sub-title { padding: 21px 0 0 18px; font: 15.700px/18px "Liberation Serif", serif; color: #444; }
.file { display: flex; align-items: flex-start; padding: 11px 0 0 17px; }
.file > svg { margin-top: 6px; }
.file b { color: #00748f; text-decoration: underline; white-space: nowrap; margin-left: 12.500px; flex: 1; }
.dl { width: 27px; height: 27px; margin: 5px 25px 0 0; background: #fff; border: 1px solid #ccc; border-radius: 3px; display: flex; align-items: center; justify-content: center; }
.actions { display: flex; justify-content: flex-end; gap: 4px; padding: 38px 17px 0 0; }
.actions button { height: 30px; border-radius: 3px; }
.ok { width: 48px; background: #e8e8e8; }
.start { width: 99px; background: #0099c6; color: #fff; font-weight: 700; text-shadow: 0 -1px 1px #034; }

/* desktop taskbar */
.taskbar { height: 50px; flex: none; display: flex; background: linear-gradient(90deg, #111314, #171314 30%, #241c1c 40%, #161719 75%, #111215); color: #fff; }
.sys, .app { display: flex; align-items: center; justify-content: center; }
.sys { width: 60px; }
.app { width: 62px; }
.sys + .app { margin-left: 3px; }
.on { background: #434344; border-bottom: 3px solid #64dcc9; padding-top: 3px; }
.discord svg { margin-right: 2px; }
.under { width: 51px; margin-left: 6px; border-bottom: 3px solid #64dcc9; padding-top: 3px; }
.tray { flex: 1; display: flex; align-items: center; justify-content: flex-end; font: 14.500px/22px "Noto Sans", sans-serif; letter-spacing: -.3px; }
.caret { margin-left: 26px; }
.bat { margin-left: 12px; }
.cloud { margin-left: 9px; }
.wifi { margin-left: 13px; }
.vol { margin-left: 10px; }
.drop { margin-left: 11px; }
.two { display: flex; flex-direction: column; align-items: center; }
.lang { width: 28px; margin-left: 15px; }
.clock { width: 76px; margin-left: 16px; padding-bottom: 1px; }
.note { width: 30px; height: 31px; margin: 4px 16px 0 22px; position: relative; }
.badge { position: absolute; left: 10px; top: 10px; width: 20px; height: 20px; border: 1px solid #888; border-radius: 50%; background: #38383a; font: bold 13px/18px "Noto Sans", sans-serif; text-align: center; }
.peek { width: 1px; height: 50px; background: #555; margin-right: 5px; }
```
